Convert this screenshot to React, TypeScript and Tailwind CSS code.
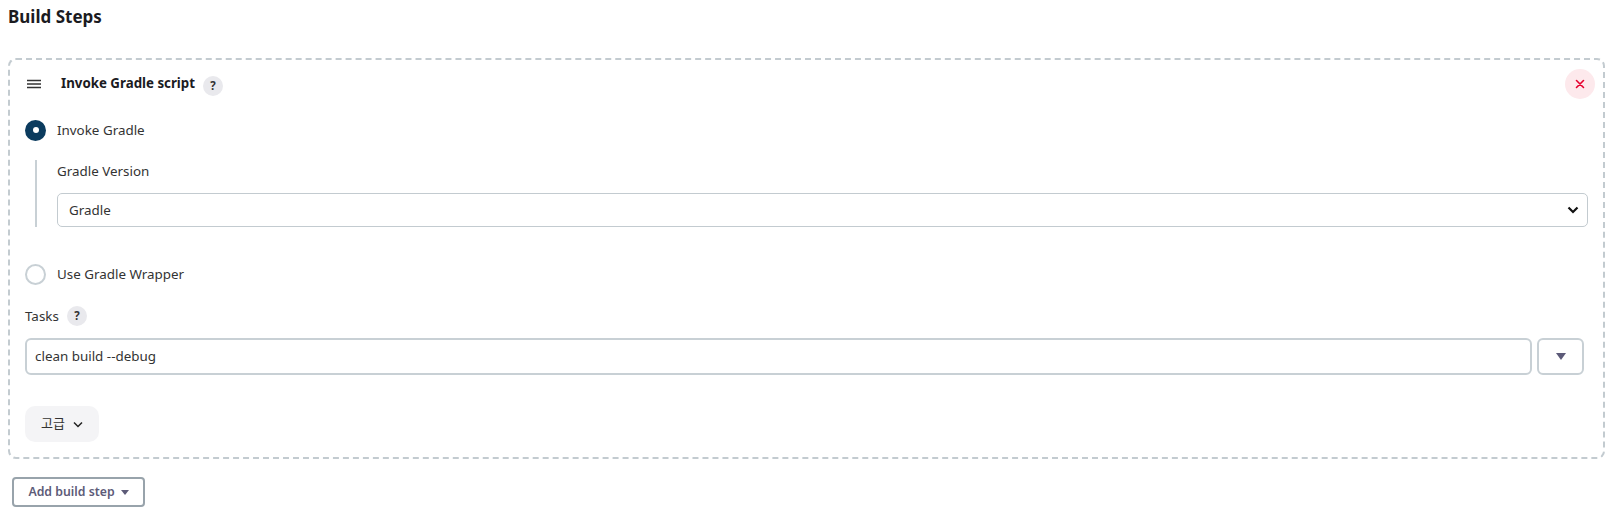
import React from "react";

const font = { fontFamily: '"Noto Sans", "Noto Sans CJK KR", sans-serif' };

function Help() {
  return (
    <span className="inline-flex h-[20px] w-[20px] items-center justify-center rounded-full bg-[#e9e9ed] text-[11.5px] font-bold text-[#333]">
      ?
    </span>
  );
}

function Radio({ checked }: { checked?: boolean }) {
  return checked ? (
    <span className="flex h-[21px] w-[21px] items-center justify-center rounded-full bg-[#0b3b5e]">
      <span className="h-[6px] w-[6px] rounded-full bg-white" />
    </span>
  ) : (
    <span className="h-[21px] w-[21px] rounded-full border-2 border-[#c8d0d5] bg-white" />
  );
}

export default function App() {
  return (
    <div className="h-[515px] w-[1617px] bg-white text-[#333]" style={font}>
      <h2 className="pl-[8px] pt-[3px] text-[17px] font-bold leading-[28px] text-[#1b1b1f]">Build Steps</h2>
      <div className="mx-[8px] mt-[27px] h-[401px] w-[1597px] rounded-[8px] border-2 border-dashed border-[#c3cbd0]">
        <div className="flex h-[48px] items-center pl-[17px] pr-[8px]">
          <svg width="14" height="10" viewBox="0 0 14 10" className="mr-[20px]">
            <path d="M0 1.5H14M0 5H14M0 8.5H14" stroke="#333" strokeWidth="1.5" />
          </svg>
          <span className="text-[13.3px] font-bold text-[#1b1b1f]">Invoke Gradle script</span>
          <span className="ml-[8px]">
            <Help />
          </span>
          <span className="ml-auto flex h-[30px] w-[30px] items-center justify-center rounded-full bg-[#fde9ec]">
            <svg width="10" height="10" viewBox="0 0 10 10">
              <path d="M1.5 1.5L8.5 8.5M8.5 1.5L1.5 8.5" stroke="#e6002e" strokeWidth="1.6" strokeLinecap="round" />
            </svg>
          </span>
        </div>
        <div className="pl-[15px] pr-[15px]">
          <div className="mt-[11px] flex h-[22px] items-center gap-[11px]">
            <Radio checked />
            <span className="text-[13.4px]">Invoke Gradle</span>
          </div>
          <div className="ml-[10px] mt-[19px] flex">
            <div className="w-[2px] bg-[#c8d0d5]" />
            <div className="flex-1 pl-[20px]">
              <div className="mt-[1px] text-[13.4px] leading-[20px]">Gradle Version</div>
              <div className="mt-[12px] flex h-[34px] items-center justify-between rounded-[5px] border border-[#c3cbd0] bg-white pl-[11px] pr-[8px] text-[13.4px]">
                <span>Gradle</span>
                <svg width="12" height="8" viewBox="0 0 12 8">
                  <path d="M1.5 1.5L6 6L10.5 1.5" stroke="#111" strokeWidth="2.2" fill="none" />
                </svg>
              </div>
            </div>
          </div>
          <div className="mt-[36px] flex h-[22px] items-center gap-[11px]">
            <Radio />
            <span className="text-[13.4px]">Use Gradle Wrapper</span>
          </div>
          <div className="mt-[21px] flex h-[20px] items-center gap-[8px]">
            <span className="text-[13.4px]">Tasks</span>
            <Help />
          </div>
          <div className="mr-[4px] mt-[12px] flex h-[37px] gap-[5px]">
            <div className="flex flex-1 items-center rounded-[6px] border-2 border-[#c8d0d5] pl-[8px] text-[13.4px]">
              clean build --debug
            </div>
            <div className="flex w-[47px] items-center justify-center rounded-[6px] border-2 border-[#c8d0d5]">
              <svg width="10" height="7" viewBox="0 0 10 7">
                <path d="M0 0H10L5 7Z" fill="#5c5a78" />
              </svg>
            </div>
          </div>
          <div className="mt-[31px] flex h-[36px] w-[74px] items-center justify-center gap-[8px] rounded-[10px] bg-[#f4f4f6] text-[13px]">
            <span>고급</span>
            <svg width="10" height="7" viewBox="0 0 10 7">
              <path d="M1 1.5L5 5.5L9 1.5" stroke="#222" strokeWidth="1.5" fill="none" />
            </svg>
          </div>
        </div>
      </div>
      <div className="ml-[12px] mt-[18px] flex h-[30px] w-[133px] items-center justify-center gap-[6px] rounded-[4px] border-2 border-[#98a3ab] text-[12.3px] font-semibold text-[#5d5b78]">
        <span>Add build step</span>
        <svg width="8" height="5" viewBox="0 0 8 5">
          <path d="M0 0H8L4 5Z" fill="#5d5b78" />
        </svg>
      </div>
    </div>
  );
}
